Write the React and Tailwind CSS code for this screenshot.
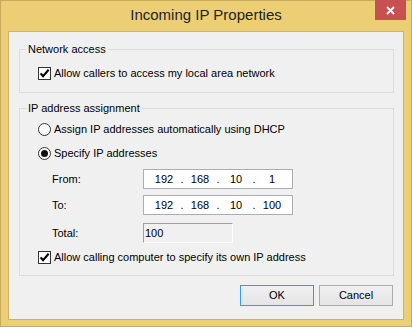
import React from 'react'

const font = { fontFamily: '"Liberation Sans", Arial, sans-serif' }

function CheckBox({ label }) {
  return (
    <div className="flex items-center gap-[3px] h-[16px]">
      <span className="flex h-[13px] w-[13px] items-center justify-center border border-[#333333] bg-white">
        <svg width="11" height="11" viewBox="0 0 11 11">
          <path d="M1.6 5.4 L4.1 8.2 L9.6 1.8" fill="none" stroke="#000" strokeWidth="2.1" />
        </svg>
      </span>
      <span>{label}</span>
    </div>
  )
}

function Radio({ label, checked }) {
  return (
    <div className="flex items-center gap-[3px] h-[16px]">
      <span className="flex h-[13px] w-[13px] items-center justify-center rounded-full border border-[#333333] bg-white">
        {checked && <span className="h-[7px] w-[7px] rounded-full bg-[#111111]" />}
      </span>
      <span>{label}</span>
    </div>
  )
}

function IpBox({ parts }) {
  return (
    <div className="flex h-[20px] w-[150px] items-center border border-[#abadb3] bg-white px-[6px]">
      {parts.map((p, i) => (
        <React.Fragment key={i}>
          {i > 0 && <span className="w-[8px] text-center">.</span>}
          <span className="w-[28px] text-center">{p}</span>
        </React.Fragment>
      ))}
    </div>
  )
}

function Group({ title, children, className }) {
  return (
    <fieldset className={'mr-[9px] ml-[10px] border border-[#dcdcdc] ' + className}>
      <legend className="ml-[6px] px-[2px] leading-[15px]">{title}</legend>
      <div className="pl-[18px]">{children}</div>
    </fieldset>
  )
}

export default function App() {
  return (
    <div
      className="flex h-[327px] w-[412px] flex-col border border-[#c6ab5c] bg-[#eccf75] px-[7px] pb-[6px] text-[11px] text-black"
      style={font}
    >
      <div className="relative flex h-[30px] shrink-0 items-center justify-center">
        <span className="mt-[-1px] text-[15px] text-[#222222]">Incoming IP Properties</span>
        <div className="absolute right-[-2px] top-[-1px] flex h-[20px] w-[31px] items-center justify-center bg-[#c75050]">
          <svg width="9" height="9" viewBox="0 0 9 9">
            <path d="M1 1 L8 8 M8 1 L1 8" stroke="#fff" strokeWidth="1.8" />
          </svg>
        </div>
      </div>
      <div className="flex flex-1 flex-col border border-[#cdb36a] bg-[#f0f0f0] pt-[10px]">
        <Group title="Network access" className="pt-[8px] pb-[11px]">
          <CheckBox label="Allow callers to access my local area network" />
        </Group>
        <Group title="IP address assignment" className="mt-[8px] pt-[5px] pb-[10px]">
          <div className="flex flex-col gap-[8px]">
            <Radio label="Assign IP addresses automatically using DHCP" />
            <Radio label="Specify IP addresses" checked />
          </div>
          <div className="mt-[8px] grid grid-cols-[91px_auto] items-center gap-y-[6px] pl-[14px]">
            <span>From:</span>
            <IpBox parts={['192', '168', '10', '1']} />
            <span>To:</span>
            <IpBox parts={['192', '168', '10', '100']} />
            <span className="mt-[2px]">Total:</span>
            <div className="mt-[2px] flex h-[20px] w-[90px] items-center border border-l-[#a0a0a0] border-t-[#a0a0a0] border-r-white border-b-white bg-[#f0f0f0] pl-[1px]">
              100
            </div>
          </div>
          <div className="mt-[6px]">
            <CheckBox label="Allow calling computer to specify its own IP address" />
          </div>
        </Group>
        <div className="mt-[9px] flex justify-end gap-[5px] pr-[10px]">
          <button className="h-[21px] w-[74px] border border-[#3399ff] bg-gradient-to-b from-[#f0f0f0] to-[#e5e5e5]">
            OK
          </button>
          <button className="h-[21px] w-[74px] border border-[#acacac] bg-gradient-to-b from-[#f0f0f0] to-[#e5e5e5]">
            Cancel
          </button>
        </div>
      </div>
    </div>
  )
}
